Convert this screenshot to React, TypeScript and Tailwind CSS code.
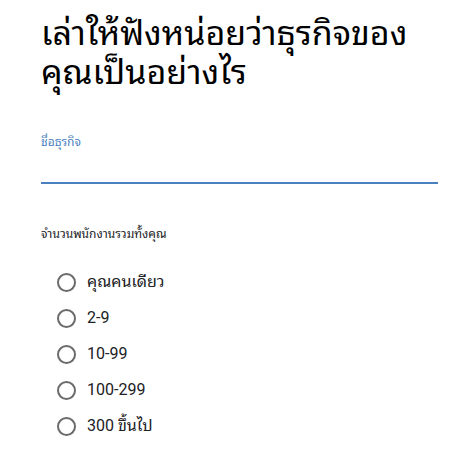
import React from "react";

const options = ["คุณคนเดียว", "2-9", "10-99", "100-299", "300 ขึ้นไป"];

export default function App() {
  return (
    <div className="w-[475px] h-[458px] bg-white overflow-hidden pl-[41px] pr-[37px] font-['Roboto','Noto_Sans_Thai_Looped',sans-serif]">
      <h1 className="pt-[14px] text-[34px] leading-[39px] text-black font-normal">
        เล่าให้ฟังหน่อยว่าธุรกิจของคุณเป็นอย่างไร
      </h1>
      <div className="mt-[42px] text-[12px] leading-[16px] text-[#4a7fc1]">ชื่อธุรกิจ</div>
      <div className="mt-[32px] h-[2px] bg-[#4a7fc0]" />
      <div className="mt-[42px] text-[12px] leading-[16px] text-[#202124]">จำนวนพนักงานรวมทั้งคุณ</div>
      <div className="mt-[31px] flex flex-col gap-[18px] pl-[16px]">
        {options.map((o) => (
          <div key={o} className="flex items-center gap-[11px] h-[18px]">
            <div className="w-[19px] h-[19px] rounded-full border-2 border-[#6b6b6b] shrink-0" />
            <span className="text-[16px] leading-[18px] text-[#202124]">{o}</span>
          </div>
        ))}
      </div>
    </div>
  );
}
